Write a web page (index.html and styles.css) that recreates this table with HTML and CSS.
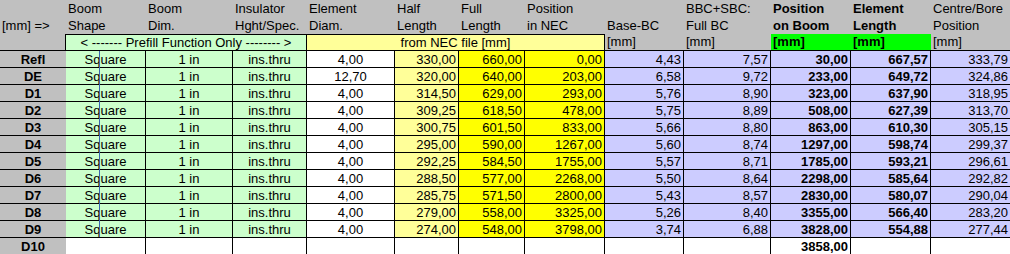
FILE: index.html
```html
<!DOCTYPE html>
<html>
<head>
<meta charset="utf-8">
<link rel="stylesheet" href="styles.css">
</head>
<body>
<div class="sheet">
  <!-- header row 1 -->
  <div class="h"></div>
  <div class="h">Boom</div>
  <div class="h">Boom</div>
  <div class="h">Insulator</div>
  <div class="h">Element</div>
  <div class="h">Half</div>
  <div class="h">Full</div>
  <div class="h">Position</div>
  <div class="h"></div>
  <div class="h">BBC+SBC:</div>
  <div class="h b">Position</div>
  <div class="h b">Element</div>
  <div class="h">Centre/Bore</div>
  <!-- header row 2 -->
  <div class="h">[mm] =&gt;</div>
  <div class="h">Shape</div>
  <div class="h">Dim.</div>
  <div class="h">Hght/Spec.</div>
  <div class="h">Diam.</div>
  <div class="h">Length</div>
  <div class="h">Length</div>
  <div class="h">in NEC</div>
  <div class="h">Base-BC</div>
  <div class="h">Full BC</div>
  <div class="h b">on Boom</div>
  <div class="h b">Length</div>
  <div class="h">Position</div>
  <!-- header row 3 -->
  <div class="h3 lbl3"></div>
  <div class="box pre">&lt; ------- Prefill Function Only -------- &gt;</div>
  <div class="box nec">from NEC file [mm]</div>
  <div class="h3">[mm]</div>
  <div class="h3">[mm]</div>
  <div class="h3 hg">[mm]</div>
  <div class="h3 hg">[mm]</div>
  <div class="h3 last">[mm]</div>

  <div class="lbl">Refl</div><div class="c g">Square</div><div class="c g">1 in</div><div class="c g">ins.thru</div><div class="c w">4,00</div><div class="c ly">330,00</div><div class="c y">660,00</div><div class="c y">0,00</div><div class="c p">4,43</div><div class="c p">7,57</div><div class="c p b">30,00</div><div class="c p b">667,57</div><div class="c p last">333,79</div>
  <div class="lbl">DE</div><div class="c g">Square</div><div class="c g">1 in</div><div class="c g">ins.thru</div><div class="c w">12,70</div><div class="c ly">320,00</div><div class="c y">640,00</div><div class="c y">203,00</div><div class="c p">6,58</div><div class="c p">9,72</div><div class="c p b">233,00</div><div class="c p b">649,72</div><div class="c p last">324,86</div>
  <div class="lbl">D1</div><div class="c g">Square</div><div class="c g">1 in</div><div class="c g">ins.thru</div><div class="c w">4,00</div><div class="c ly">314,50</div><div class="c y">629,00</div><div class="c y">293,00</div><div class="c p">5,76</div><div class="c p">8,90</div><div class="c p b">323,00</div><div class="c p b">637,90</div><div class="c p last">318,95</div>
  <div class="lbl">D2</div><div class="c g">Square</div><div class="c g">1 in</div><div class="c g">ins.thru</div><div class="c w">4,00</div><div class="c ly">309,25</div><div class="c y">618,50</div><div class="c y">478,00</div><div class="c p">5,75</div><div class="c p">8,89</div><div class="c p b">508,00</div><div class="c p b">627,39</div><div class="c p last">313,70</div>
  <div class="lbl">D3</div><div class="c g">Square</div><div class="c g">1 in</div><div class="c g">ins.thru</div><div class="c w">4,00</div><div class="c ly">300,75</div><div class="c y">601,50</div><div class="c y">833,00</div><div class="c p">5,66</div><div class="c p">8,80</div><div class="c p b">863,00</div><div class="c p b">610,30</div><div class="c p last">305,15</div>
  <div class="lbl">D4</div><div class="c g">Square</div><div class="c g">1 in</div><div class="c g">ins.thru</div><div class="c w">4,00</div><div class="c ly">295,00</div><div class="c y">590,00</div><div class="c y">1267,00</div><div class="c p">5,60</div><div class="c p">8,74</div><div class="c p b">1297,00</div><div class="c p b">598,74</div><div class="c p last">299,37</div>
  <div class="lbl">D5</div><div class="c g">Square</div><div class="c g">1 in</div><div class="c g">ins.thru</div><div class="c w">4,00</div><div class="c ly">292,25</div><div class="c y">584,50</div><div class="c y">1755,00</div><div class="c p">5,57</div><div class="c p">8,71</div><div class="c p b">1785,00</div><div class="c p b">593,21</div><div class="c p last">296,61</div>
  <div class="lbl">D6</div><div class="c g">Square</div><div class="c g">1 in</div><div class="c g">ins.thru</div><div class="c w">4,00</div><div class="c ly">288,50</div><div class="c y">577,00</div><div class="c y">2268,00</div><div class="c p">5,50</div><div class="c p">8,64</div><div class="c p b">2298,00</div><div class="c p b">585,64</div><div class="c p last">292,82</div>
  <div class="lbl">D7</div><div class="c g">Square</div><div class="c g">1 in</div><div class="c g">ins.thru</div><div class="c w">4,00</div><div class="c ly">285,75</div><div class="c y">571,50</div><div class="c y">2800,00</div><div class="c p">5,43</div><div class="c p">8,57</div><div class="c p b">2830,00</div><div class="c p b">580,07</div><div class="c p last">290,04</div>
  <div class="lbl">D8</div><div class="c g">Square</div><div class="c g">1 in</div><div class="c g">ins.thru</div><div class="c w">4,00</div><div class="c ly">279,00</div><div class="c y">558,00</div><div class="c y">3325,00</div><div class="c p">5,26</div><div class="c p">8,40</div><div class="c p b">3355,00</div><div class="c p b">566,40</div><div class="c p last">283,20</div>
  <div class="lbl">D9</div><div class="c g">Square</div><div class="c g">1 in</div><div class="c g">ins.thru</div><div class="c w">4,00</div><div class="c ly">274,00</div><div class="c y">548,00</div><div class="c y">3798,00</div><div class="c p">3,74</div><div class="c p">6,88</div><div class="c p b">3828,00</div><div class="c p b">554,88</div><div class="c p last">277,44</div>
  <div class="lbl">D10</div><div class="c e"></div><div class="c e"></div><div class="c e"></div><div class="c e"></div><div class="c e"></div><div class="c e"></div><div class="c e"></div><div class="c e"></div><div class="c e"></div><div class="c e r b">3858,00</div><div class="c e"></div><div class="c e last"></div>

  <div class="marker"></div>
</div>
</body>
</html>
```

FILE: styles.css
```css
html, body {
  margin: 0;
  padding: 0;
  background: #c0c0c0;
}

body {
  width: 1010px;
  height: 254px;
  overflow: hidden;
}

.sheet {
  position: relative;
  display: grid;
  grid-template-columns: 66px 80px 87px 74px 88px 64px 66px 80px 79px 87px 80px 80px 79px;
  grid-auto-rows: 17px;
  font-family: "Liberation Sans", Arial, sans-serif;
  font-size: 13px;
  color: #000;
  background: #c0c0c0;
}

.sheet > div {
  box-sizing: border-box;
  white-space: nowrap;
  line-height: 17px;
}

.h {
  padding-left: 2px;
  overflow: visible;
}

.b {
  font-weight: bold;
}

.h3 {
  padding-left: 2px;
  border-bottom: 1px solid #000;
  line-height: 16px !important;
}

.lbl3 {
  border-right: 1px solid #000;
}

.hg {
  background: #00ff00;
  font-weight: bold;
}

.box {
  grid-column: span 3;
  border-top: 1px solid #000;
  border-right: 1px solid #000;
  border-bottom: 1px solid #000;
  text-align: center;
  line-height: 15px !important;
}

.pre {
  background: #ccffcc;
}

.nec {
  grid-column: span 4;
  background: #ffff99;
}

.lbl {
  background: #c0c0c0;
  font-weight: bold;
  text-align: center;
  border-bottom: 1px solid #000;
}

.c {
  border-right: 1px solid #000;
  border-bottom: 1px solid #000;
  padding: 0 2px;
  overflow: hidden;
}

.last {
  border-right: none !important;
}

.g {
  background: #ccffcc;
  text-align: center;
}

.w {
  background: #ffffff;
  text-align: center;
}

.ly {
  background: #ffff99;
  text-align: right;
}

.y {
  background: #ffff00;
  text-align: right;
}

.p {
  background: #ccccff;
  text-align: right;
}

.e {
  background: #ffffff;
}

.r {
  text-align: right;
}

.marker {
  position: absolute;
  left: 99px;
  top: 51px;
  width: 1px;
  height: 186px;
  background: #3a62b0;
}
```
